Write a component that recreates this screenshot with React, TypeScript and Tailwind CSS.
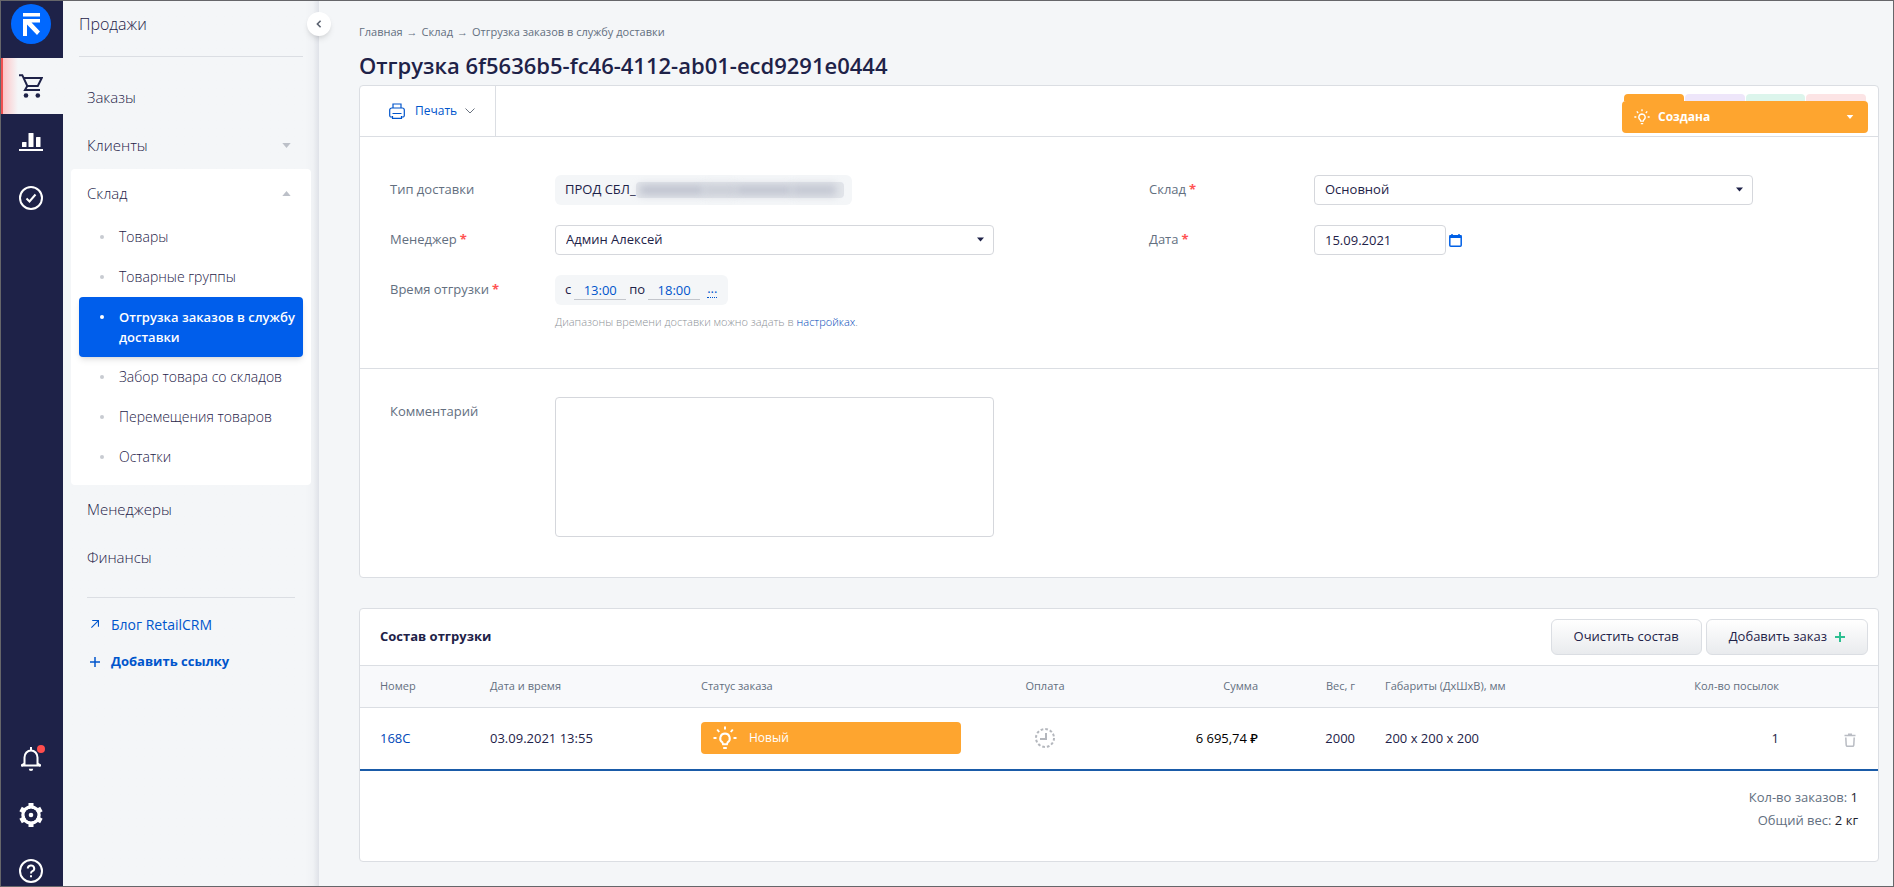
import React, { useState } from 'react';

const menuBottom = ['Менеджеры', 'Финансы'];

const stockItems = [
  { id: 1, title: 'Товары' },
  { id: 2, title: 'Товарные группы' },
  { id: 3, title: 'Отгрузка заказов в службу доставки' },
  { id: 4, title: 'Забор товара со складов' },
  { id: 5, title: 'Перемещения товаров' },
  { id: 6, title: 'Остатки' },
];

const orders = [{ number: '168C', date: '03.09.2021 13:55', status: 'Новый', sum: '6 695,74 ₽', weight: '2000', size: '200 x 200 x 200', count: 1 }];

function Bulb({ className }: { className?: string }) {
  return (
    <svg viewBox="0 0 24 24" fill="none" stroke="currentColor" strokeWidth="2" className={className}>
      <path d="M12 7.5a4.800 4.800 0 0 0-2.600 8.800l.6 2h4l.6-2A4.800 4.800 0 0 0 12 7.500z" />
      <path d="M10.200 22h3.600M12 0.500v3M0.500 12h3M20.500 12h3M4.200 3.500l2 2.500M19.800 3.500l-2 2.500" />
    </svg>
  );
}

function Triangle({ className, up }: { className?: string; up?: boolean }) {
  return (
    <svg viewBox="0 0 10 6" fill="currentColor" className={className}>
      <path d={up ? 'M5 0l5 6H0z' : 'M0 0h10L5 6z'} />
    </svg>
  );
}

function Rail() {
  return (
    <nav className="flex w-[62px] shrink-0 flex-col bg-[#1e2248] pb-[3px] text-white">
      <a href="#home" aria-label="RetailCRM" className="mt-[3px] mb-[14px] flex justify-center pr-0.5">
        <svg viewBox="0 0 40 40" className="h-10 w-10">
          <circle cx="20" cy="20" r="20" fill="#0068ff" />
          <path d="M12 9h17v3.500H12zM12 15h17v3.500h-8.500L29 27.500 26 31l-10-10.500V32h-4z" fill="#fff" />
        </svg>
      </a>
      <a href="#sales" aria-label="Продажи" className="flex h-14 w-full items-center justify-center border-l-2 border-[#f05050] bg-linear-to-r from-[#fbc5c7] to-[#f4f6f8] to-25% pr-1 text-[#1e2248]">
        <svg viewBox="0 0 24 24" fill="none" stroke="currentColor" strokeWidth="2" className="h-6 w-6">
          <path d="M0 1.200h3.300l5 10.800h10.500L22.800 4H4.600M8.300 12l-2.300 4h15" />
          <circle cx="7" cy="21.500" r="2.300" fill="currentColor" stroke="none" />
          <circle cx="18.800" cy="21.500" r="2.300" fill="currentColor" stroke="none" />
        </svg>
      </a>
      <a href="#analytics" aria-label="Аналитика" className="flex h-14 w-full items-center justify-center pr-0.5">
        <svg viewBox="0 0 24 24" fill="currentColor" className="h-6 w-6">
          <path d="M0 19h24v2H0z" />
          <rect x="3" y="12" width="4.500" height="5" rx="0.500" />
          <rect x="9.500" y="3" width="5" height="14" rx="0.500" />
          <rect x="17" y="7" width="4.500" height="10" rx="0.500" />
        </svg>
      </a>
      <a href="#tasks" aria-label="Задачи" className="flex h-14 w-full items-center justify-center pr-0.5">
        <svg viewBox="0 0 24 24" fill="none" stroke="currentColor" strokeWidth="2" className="h-6 w-6">
          <circle cx="12" cy="12" r="11" />
          <path d="M7.500 12.500l3 3 6-7" />
        </svg>
      </a>
      <div className="mt-auto flex flex-col items-center gap-8 pr-0.5">
        <a href="#notifications" aria-label="Уведомления" className="relative">
          <svg viewBox="0 0 24 24" fill="none" stroke="currentColor" strokeWidth="2" className="h-6 w-6">
            <path d="M3 18.500h18M5.500 19v-8.500a6.500 7 0 0 1 13 0V19" />
            <path d="M3 19.500v-1.500l2.500-1.500M21 19.500v-1.500l-2.500-1.500M12 0v3.500" />
            <path d="M9.800 21.800h4.400a2.200 2.200 0 0 1-4.400 0z" fill="currentColor" stroke="none" />
          </svg>
          <span className="absolute -top-0.5 left-[18px] h-2 w-2 rounded-full bg-[#ff4d4d]" />
        </a>
        <a href="#settings" aria-label="Настройки">
          <svg viewBox="0 0 24 24" fill="none" stroke="currentColor" strokeWidth="3.500" className="h-6 w-6">
            <circle cx="12" cy="12" r="8" />
            <path d="M12 5V0M12 19v5M18 8.500l4.400-2.500M6 15.500L1.600 18M18 15.500l4.400 2.500M6 8.500L1.600 6" strokeWidth="5" />
            <circle cx="12" cy="12" r="6.300" fill="#1e2248" stroke="none" />
            <circle cx="12" cy="12" r="2.300" fill="currentColor" stroke="none" />
          </svg>
        </a>
        <a href="#help" aria-label="Помощь">
          <svg viewBox="0 0 24 24" fill="none" stroke="currentColor" strokeWidth="2" className="h-6 w-6">
            <circle cx="12" cy="12" r="11" />
            <path d="M8.800 9.500a3.200 3 0 1 1 4.600 2.700c-1 .5-1.400 1-1.400 2.300M12 16.200v2" />
          </svg>
        </a>
      </div>
    </nav>
  );
}

function Sidebar() {
  const [active, setActive] = useState(3);

  return (
    <aside className="relative w-64 shrink-0 bg-linear-to-l from-[#dfe2e8] via-[#f0f2f5] via-[6px] to-[#f4f6f8] to-[14px] px-2">
      <button aria-label="Свернуть меню" className="absolute top-[11px] -right-3 z-10 flex h-6 w-6 items-center justify-center rounded-full bg-white shadow-md">
        <svg viewBox="0 0 8 10" fill="none" stroke="#5b6270" strokeWidth="2" className="h-2 w-2">
          <path d="M6 1L2 5l4 4" />
        </svg>
      </button>
      <div className="mx-2 h-14 border-b border-[#dbdee3] pt-[11px] text-[16px] leading-6 font-light">Продажи</div>
      <ul className="pt-4 text-[15px] font-light">
        <li>
          <a href="#orders" className="flex h-12 items-center px-4">
            Заказы
          </a>
        </li>
        <li>
          <a href="#clients" className="flex h-12 items-center justify-between px-4">
            Клиенты
            <Triangle className="mr-1 h-[5px] w-[9px] text-[#bcc0c8]" />
          </a>
        </li>
        <li className="rounded bg-white pb-2">
          <a href="#stock" className="flex h-12 items-center justify-between px-4">
            Склад
            <Triangle up className="mr-1 h-[5px] w-[9px] text-[#bcc0c8]" />
          </a>
          <ul className="px-2 text-[14px] leading-5">
            {stockItems.map((item) => (
              <li key={item.id}>
                <a
                  href="#item"
                  onClick={() => setActive(item.id)}
                  className={active === item.id ? 'flex rounded bg-[#005eeb] py-2.5 pl-[21px] text-[13px] font-semibold text-white shadow-md' : 'flex py-2.5 pl-[21px]'}
                >
                  <span className={active === item.id ? 'mt-2 mr-[15px] h-1 w-1 shrink-0 rounded-full bg-white' : 'mt-2 mr-[15px] h-1 w-1 shrink-0 rounded-full bg-[#c8cbd1]'} />
                  {item.title}
                </a>
              </li>
            ))}
          </ul>
        </li>
        {menuBottom.map((title) => (
          <li key={title}>
            <a href="#section" className="flex h-12 items-center px-4">
              {title}
            </a>
          </li>
        ))}
      </ul>
      <div className="mx-4 mt-4 border-t border-[#dbdee3] pt-[7px] text-[#0055cc]">
        <a href="#blog" className="flex h-[38px] items-center text-[14px] font-medium">
          <svg viewBox="0 0 10 10" fill="none" stroke="currentColor" className="mr-3 ml-1 h-2 w-2">
            <path d="M1.500 0.700h7.800v7.800M9.300 0.700L0.500 9.500" strokeWidth="1.400" />
          </svg>
          Блог RetailCRM
        </a>
        <a href="#add" className="flex h-[38px] items-center text-[13px] font-bold">
          <svg viewBox="0 0 10 10" fill="none" stroke="currentColor" className="mr-[11px] ml-[3px] h-2.5 w-2.5">
            <path d="M5 0v10M0 5h10" strokeWidth="1.500" />
          </svg>
          Добавить ссылку
        </a>
      </div>
    </aside>
  );
}

function Field({ label, id, required, children }: { label: string; id?: string; required?: boolean; children: React.ReactNode }) {
  return (
    <div className="flex pr-[125px] pl-[30px]">
      <label htmlFor={id} className="w-[165px] shrink-0 pt-1 leading-5 text-[#636f7f]">
        {label}
        {required && <span className="ml-[3px] font-bold text-[#ff5353]">*</span>}
      </label>
      <div className="min-w-0 flex-1">{children}</div>
    </div>
  );
}

function Select({ id, value }: { id: string; value: string }) {
  return (
    <div className="relative">
      <select id={id} defaultValue={value} className="h-[30px] w-full appearance-none rounded border border-[#d5d7dc] bg-white px-2.5 text-[#1e2248]">
        <option>{value}</option>
      </select>
      <Triangle className="pointer-events-none absolute top-3 right-2.5 h-[5px] w-[7px]" />
    </div>
  );
}

function Shipment() {
  return (
    <section className="rounded border border-[#dbdee3] bg-white text-[13px]">
      <div className="flex h-[51px] items-stretch justify-between border-b border-[#dbdee3]">
        <button className="flex items-center border-r border-[#dbdee3] pr-5 pl-[29px] text-[12px] text-[#0055cc]">
          <svg viewBox="0 0 16 16" fill="none" stroke="currentColor" strokeWidth="1.200" className="mr-2.5 h-4 w-4">
            <path d="M4 5V1h8v4" />
            <path d="M3.500 14H2.200A1.500 1.500 0 0 1 .7 12.500V7a2 2 0 0 1 2-2h10.600a2 2 0 0 1 2 2v5.500a1.500 1.500 0 0 1-1.500 1.500h-1.300" />
            <path d="M3.500 10.500h9M3.500 13v2.300h9V13" />
          </svg>
          Печать
          <svg viewBox="0 0 10 6" fill="none" stroke="#6a7280" className="ml-2 h-1.5 w-2.5">
            <path d="M0.500 0.500L5 5l4.500-4.500" />
          </svg>
        </button>
        <div className="mr-2.5 w-[246px] pt-2">
          <div className="flex gap-px px-0.5">
            <span className="h-[7px] flex-1 rounded-t-sm bg-[#fea52f]" />
            <span className="h-[7px] flex-1 rounded-t-sm bg-[#eee6fa]" />
            <span className="h-[7px] flex-1 rounded-t-sm bg-[#dcf5ec]" />
            <span className="h-[7px] flex-1 rounded-t-sm bg-[#fce4e5]" />
          </div>
          <button className="flex h-8 w-full items-center rounded bg-[#fea52f] px-3 text-[12px] font-bold text-white">
            <Bulb className="mr-2 h-4 w-4" />
            Создана
            <Triangle className="mr-0.5 ml-auto h-1 w-2" />
          </button>
        </div>
      </div>

      <div className="grid grid-cols-2 border-b border-[#dbdee3] pt-[38px] pb-9">
        <div className="flex flex-col gap-5">
          <Field label="Тип доставки">
            <div className="flex h-[30px] w-[297px] items-center rounded-md bg-[#f4f6f8] pl-2.5">
              ПРОД СБЛ_
              <span aria-hidden="true" className="flex h-4 w-[208px] items-center rounded-sm bg-[#e2e5ea] px-1">
                <span className="h-2 w-16 bg-[#b6bac8] blur-[4px]" />
                <span className="h-2.5 w-8 bg-[#c6cad4] blur-[4px]" />
                <span className="h-2 w-14 bg-[#b8bcca] blur-[4px]" />
                <span className="h-2.5 w-11 bg-[#c0c4d0] blur-[4px]" />
              </span>
            </div>
          </Field>
          <Field label="Менеджер" id="manager" required>
            <Select id="manager" value="Админ Алексей" />
          </Field>
          <Field label="Время отгрузки" id="time-from" required>
            <div className="flex h-[30px] w-[173px] items-center gap-[3px] rounded-md bg-[#f4f6f8] pl-2.5">
              с
              <input id="time-from" defaultValue="13:00" className="h-5 w-[52px] border-b border-[#c3c6cc] text-center text-[#0055cc]" />
              по
              <input aria-label="Время отгрузки по" defaultValue="18:00" className="h-5 w-[52px] border-b border-[#c3c6cc] text-center text-[#0055cc]" />
              <a href="#more" className="ml-1 h-4 border-b border-dotted border-[#0055cc] leading-3 text-[#0055cc]">
                ...
              </a>
            </div>
            <p className="mt-[7px] text-[11px] leading-5 font-light text-[#8d9197]">
              Диапазоны времени доставки можно задать в{' '}
              <a href="#settings" className="text-[#0047b8]">
                настройках
              </a>
              .
            </p>
          </Field>
        </div>
        <div className="flex flex-col gap-5">
          <Field label="Склад" id="store" required>
            <Select id="store" value="Основной" />
          </Field>
          <Field label="Дата" id="date" required>
            <div className="flex items-center">
              <input id="date" defaultValue="15.09.2021" className="h-[30px] w-[132px] rounded border border-[#d5d7dc] px-2.5" />
              <button aria-label="Календарь" className="ml-[3px] text-[#0060e6]">
                <svg viewBox="0 0 13 13" fill="none" stroke="currentColor" className="h-[13px] w-[13px]">
                  <rect x="0.800" y="1.800" width="11.400" height="10.400" rx="1" strokeWidth="1.500" />
                  <path d="M0.500 2.500h12" strokeWidth="3" />
                  <path d="M3 0v2M10 0v2" strokeWidth="1.500" />
                </svg>
              </button>
            </div>
          </Field>
        </div>
      </div>

      <div className="grid grid-cols-2 pt-7 pb-10">
        <Field label="Комментарий" id="comment">
          <textarea id="comment" className="block h-[140px] w-full resize-none rounded border border-[#d5d7dc] p-2" />
        </Field>
      </div>
    </section>
  );
}

function Orders() {
  return (
    <section className="mt-[30px] rounded border border-[#dbdee3] bg-white text-[13px]">
      <div className="flex h-[57px] items-center justify-between border-b border-[#dbdee3] pr-2.5 pl-5">
        <h2 className="font-bold">Состав отгрузки</h2>
        <div className="flex gap-1 font-medium">
          <button className="h-9 rounded-md border border-[#dbdee3] bg-linear-to-b from-white to-[#e9ebee] px-[22px]">Очистить состав</button>
          <button className="flex h-9 items-center gap-2 rounded-md border border-[#dbdee3] bg-linear-to-b from-white to-[#e9ebee] px-[22px]">
            Добавить заказ
            <svg viewBox="0 0 10 10" fill="none" stroke="#2dbf91" className="h-2.5 w-2.5">
              <path d="M5 0v10M0 5h10" strokeWidth="2" />
            </svg>
          </button>
        </div>
      </div>
      <table className="w-full table-fixed text-left">
        <thead>
          <tr className="h-[41px] border-b border-[#dbdee3] bg-[#f8f9fb] text-[11px] text-[#636f7f]">
            <th className="w-[115px] pl-5 font-normal">Номер</th>
            <th className="w-[211px] px-[15px] font-normal">Дата и время</th>
            <th className="w-[290px] px-[15px] font-normal">Статус заказа</th>
            <th className="w-[138px] px-[15px] text-center font-normal">Оплата</th>
            <th className="w-[159px] px-[15px] text-right font-normal">Сумма</th>
            <th className="w-[97px] px-[15px] text-right font-normal">Вес, г</th>
            <th className="w-[230px] px-[15px] font-normal">Габариты (ДхШхВ), мм</th>
            <th className="w-[194px] px-[15px] text-right font-normal">Кол-во посылок</th>
            <th className="w-[84px]" />
          </tr>
        </thead>
        <tbody>
          {orders.map((item) => (
            <tr key={item.number} className="h-[63px] border-b-2 border-[#1a5ba8]">
              <td className="pl-5">
                <a href="#order" className="text-[#0047b8]">
                  {item.number}
                </a>
              </td>
              <td className="px-[15px]">{item.date}</td>
              <td className="px-[15px]">
                <div className="flex h-8 items-center rounded bg-[#fea52f] pl-3 text-[12px] font-medium text-white">
                  <Bulb className="mr-3 h-6 w-6" />
                  {item.status}
                </div>
              </td>
              <td className="px-[15px]">
                <svg viewBox="0 0 20 20" fill="none" stroke="#b4b7bd" strokeWidth="2" className="mx-auto h-5 w-5">
                  <circle cx="10" cy="10" r="9" strokeDasharray="2.700 2.010" />
                  <path d="M11 5v6H5" />
                </svg>
              </td>
              <td className="px-[15px] text-right font-medium text-black">{item.sum}</td>
              <td className="px-[15px] text-right">{item.weight}</td>
              <td className="px-[15px]">{item.size}</td>
              <td className="px-[15px] text-right">{item.count}</td>
              <td className="pr-[22px]">
                <button aria-label="Удалить" className="ml-auto block pt-1 text-[#b9bcc3]">
                  <svg viewBox="0 0 12 14" fill="none" stroke="currentColor" strokeWidth="1.500" className="h-[14px] w-3">
                    <path d="M0.500 2.500h11M4 1.200h4M1.800 4.500l.4 7.500a1.200 1.200 0 0 0 1.200 1.200h5.200a1.200 1.200 0 0 0 1.200-1.200l.4-7.500" />
                  </svg>
                </button>
              </td>
            </tr>
          ))}
        </tbody>
      </table>
      <div className="h-[90px] pt-[15px] pr-5 text-right leading-[23px] text-[#636f7f]">
        <p>
          Кол-во заказов: <span className="text-[#1e1e2e]">1</span>
        </p>
        <p>
          Общий вес: <span className="text-[#1e1e2e]">2 кг</span>
        </p>
      </div>
    </section>
  );
}

function App() {
  return (
    <div className="flex min-h-screen border border-[#66666a] bg-[#f4f6f8] font-['Open_Sans','Noto_Sans',sans-serif] text-[#1e2248]">
      <Rail />
      <Sidebar />
      <main className="min-w-0 flex-1 pt-[22px] pr-3.5 pb-5 pl-10">
        <div className="flex gap-1 text-[11px] leading-[18px] text-[#636f7f]">
          <a href="#home">Главная</a>→<a href="#stock">Склад</a>→<a href="#shipments">Отгрузка заказов в службу доставки</a>
        </div>
        <h1 className="mt-2 mb-1 text-[22px] leading-8 font-semibold">Отгрузка 6f5636b5-fc46-4112-ab01-ecd9291e0444</h1>
        <Shipment />
        <Orders />
      </main>
    </div>
  );
}

export default App;
